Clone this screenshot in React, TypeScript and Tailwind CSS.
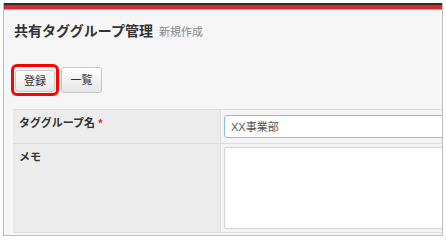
const font = { fontFamily: '"Liberation Sans", "Noto Sans CJK JP", sans-serif' }

const App = () => {
    return (
        <div className="w-[446px] h-[240px] bg-white pt-[3px] pl-[3px] overflow-hidden" style={font}>
            <div className="w-[440px] h-[233px] flex flex-col bg-[#f6f6f6] border-x border-b border-[#bdbdbd] overflow-hidden">
                {/* top band */}
                <div className="h-[2px] bg-[#2e2e2e]" />
                <div className="h-[4px] bg-[#d42b2b]" />
                <div className="h-[1px] bg-[#e98a8a]" />

                <div className="flex items-end gap-[6px] pl-[10px] h-[31px]">
                    <span className="text-[14px] font-bold text-[#333] leading-[20px]">共有タググループ管理</span>
                    <span className="text-[11px] text-[#888] leading-[18px]">新規作成</span>
                </div>

                <div className="flex items-center gap-[2px] pl-[7px] mt-[23px]">
                    <div className="border-[3px] border-[#ff0000] rounded-[6px] p-[1px]">
                        <button className="w-[40px] h-[22px] rounded-[3px] border border-[#c8c8c8] bg-gradient-to-b from-white to-[#e6e6e6] text-[11px] text-[#333]">
                            登録
                        </button>
                    </div>
                    <button className="w-[41px] h-[26px] rounded-[3px] border border-[#c8c8c8] bg-gradient-to-b from-white to-[#e6e6e6] text-[11px] text-[#333]">
                        一覧
                    </button>
                </div>

                <div className="ml-[9px] mt-[13px] w-[440px] border-t border-[#dcdcdc]">
                    <div className="flex h-[34px] border-b border-[#dcdcdc]">
                        <div className="w-[208px] bg-[#ececec] border-r border-[#dcdcdc] pl-[6px] pt-[5px] text-[11px] font-bold text-[#333]">
                            タググループ名 <span className="text-[#d03030]">*</span>
                        </div>
                        <div className="flex-1 bg-[#f4f4f4] pl-[3px] pt-[5px]">
                            <div className="h-[23px] bg-white border border-[#8cbbe8] rounded-[3px] pl-[6px] flex items-center text-[11px] text-[#555]">
                                XX事業部
                            </div>
                        </div>
                    </div>
                    <div className="flex h-[89px] border-b border-[#dcdcdc]">
                        <div className="w-[208px] bg-[#ececec] border-r border-[#dcdcdc] pl-[6px] pt-[5px] text-[11px] font-bold text-[#333]">
                            メモ
                        </div>
                        <div className="flex-1 bg-[#f4f4f4] pl-[3px] pt-[3px]">
                            <div className="h-[82px] bg-white border border-[#d4d4d4] rounded-[2px]" />
                        </div>
                    </div>
                </div>
            </div>
        </div>
    )
}

export default App
